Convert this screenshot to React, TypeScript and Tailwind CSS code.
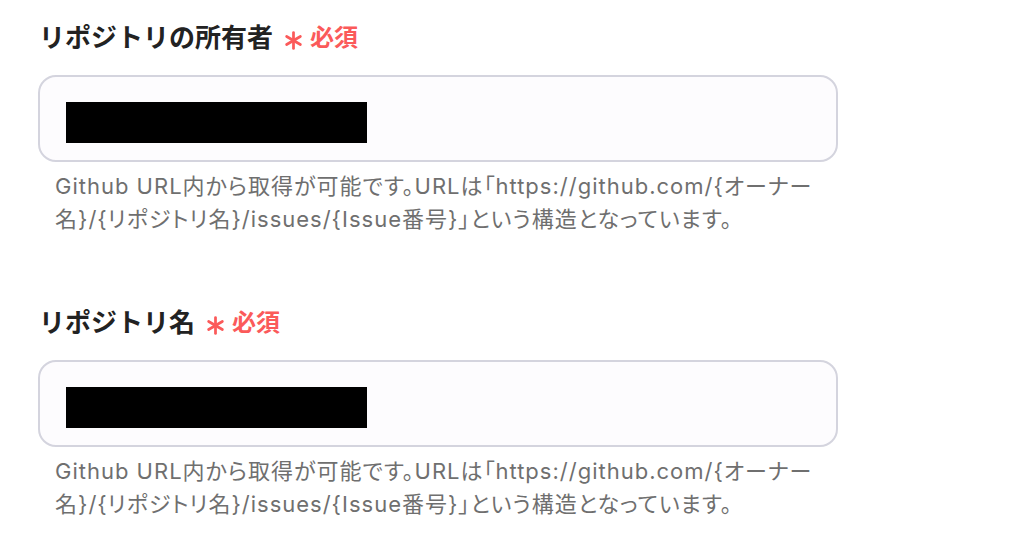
import React from 'react';

const fields = [
  { label: 'リポジトリの所有者' },
  { label: 'リポジトリ名' },
];

const help =
  'Github URL内から取得が可能です。URLは「https://github.com/{オーナー名}/{リポジトリ名}/issues/{Issue番号}」という構造となっています。';

const Asterisk = () => (
  <svg width="19" height="19" viewBox="0 0 18 18" className="ml-[4px] mt-[5px]">
    <g stroke="#fb5a5a" strokeWidth="2.6" strokeLinecap="round">
      <line x1="9" y1="1.5" x2="9" y2="16.5" />
      <line x1="2.5" y1="5.25" x2="15.5" y2="12.75" />
      <line x1="2.5" y1="12.75" x2="15.5" y2="5.25" />
    </g>
  </svg>
);

export default function App() {
  return (
    <div
      className="min-h-screen bg-white pl-[38px] pt-[20px]"
      style={{ fontFamily: "Inter, 'Noto Sans CJK JP', sans-serif" }}
    >
      <div className="flex w-[800px] flex-col gap-[69px]">
        {fields.map((field) => (
          <div key={field.label} className="flex flex-col">
            <div className="ml-[1px] flex h-[36px] items-center gap-[7px]">
              <span className="text-[26px] font-bold leading-[36px] text-[#222222]">
                {field.label}
              </span>
              <Asterisk />
              <span className="text-[24px] font-bold leading-[36px] text-[#fb5a5a]">
                必須
              </span>
            </div>
            <div className="mt-[19px] h-[87px] rounded-[18px] border-2 border-[#d4d4de] bg-[#fdfcfe] pl-[26px] pt-[25px]">
              <div className="h-[41px] w-[301px] bg-black" />
            </div>
            <p className="mt-[8px] px-[17px] text-[22px] leading-[33px] tracking-[1px] text-[#6f6f6f] [font-feature-settings:'palt']">
              {help}
            </p>
          </div>
        ))}
      </div>
    </div>
  );
}
